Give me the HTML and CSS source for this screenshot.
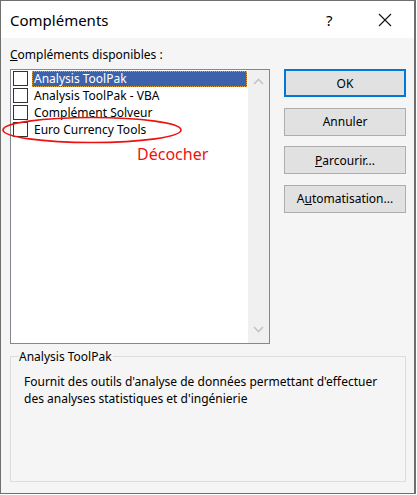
FILE: index.html
```html
<!DOCTYPE html>
<html>
<head>
  <meta charset="utf-8" />
  <title>Compléments</title>
  <link rel="stylesheet" href="styles.css">
</head>
<body>
  <section class="window">
    <header class="titlebar">
      <h1>Compléments</h1>
      <span class="help">?</span>
      <svg class="close" width="14" height="14" viewBox="0 0 14 14">
        <path d="M1 1 L13 13 M13 1 L1 13" stroke="#111" stroke-width="1.1" fill="none" />
      </svg>
    </header>
    <section class="content">
      <section class="main">
        <section class="avail">
          <label class="caption"><u>C</u>ompléments disponibles :</label>
          <div class="list">
            <ul class="items">
              <li class="selected"><span class="box"></span><span class="name">Analysis ToolPak</span></li>
              <li><span class="box"></span><span class="name">Analysis ToolPak - VBA</span></li>
              <li><span class="box"></span><span class="name">Complément Solveur</span></li>
              <li><span class="box"></span><span class="name">Euro Currency Tools</span></li>
            </ul>
            <div class="scrollbar">
              <svg width="11" height="7" viewBox="0 0 11 7"><path d="M1 6 L5.5 1.5 L10 6" stroke="#c4c4c4" stroke-width="1.6" fill="none" /></svg>
              <svg width="11" height="7" viewBox="0 0 11 7"><path d="M1 1 L5.5 5.5 L10 1" stroke="#c4c4c4" stroke-width="1.6" fill="none" /></svg>
            </div>
          </div>
        </section>
        <section class="buttons">
          <button type="button" class="default">OK</button>
          <button type="button">Annuler</button>
          <button type="button"><u>P</u>arcourir...</button>
          <button type="button">A<u>u</u>tomatisation...</button>
        </section>
      </section>
      <fieldset class="details">
        <legend>Analysis ToolPak</legend>
        <p>Fournit des outils d'analyse de données permettant d'effectuer des analyses statistiques et d'ingénierie</p>
      </fieldset>
    </section>
    <!-- annotation drawn over the screenshot -->
    <svg class="mark" width="184" height="30" viewBox="0 0 184 30">
      <ellipse cx="91" cy="14" rx="89" ry="12.5" stroke="#ee1111" stroke-width="1.6" fill="none" />
    </svg>
    <span class="note">Décocher</span>
  </section>
</body>
</html>
```

FILE: styles.css
```css
* { box-sizing: border-box; margin: 0; padding: 0; }
body {
  font-family: "Noto Sans", "Open Sans", sans-serif;
  font-size: 12px;
  color: #000;
  background: #fff;
}
.window {
  position: relative;
  width: 416px;
  height: 494px;
  border: 1px solid #6f6f6f;
  border-right-width: 2px;
  background: #f5f5f5;
  display: flex;
  flex-direction: column;
}
.titlebar {
  height: 37px;
  background: #fff;
  display: flex;
  align-items: center;
  padding-left: 9px;
}
.titlebar h1 {
  font-size: 15px;
  font-weight: normal;
  flex: 1;
}
.help {
  font-size: 15px;
  width: 18px;
  margin-right: 34px;
}
.close {
  margin-right: 22px;
}
.content {
  padding: 8px 8px 0 9px;
  display: flex;
  flex-direction: column;
}
.main {
  display: flex;
  gap: 14px;
}
.caption {
  display: block;
  line-height: 17px;
  height: 23px;
}
.list {
  width: 260px;
  height: 275px;
  border: 1px solid #828790;
  background: #fff;
  display: flex;
}
.items {
  flex: 1;
  list-style: none;
}
.items li {
  height: 17px;
  display: flex;
  align-items: center;
  padding-left: 2px;
}
.box {
  width: 15px;
  height: 15px;
  border: 1px solid #333;
  background: #fff;
  margin-right: 4px;
}
.name {
  line-height: 16px;
  padding: 0 2px;
  flex: 1;
  margin-right: 1px;
}
.selected .name {
  background: #3b62aa;
  color: #fff;
  outline: 1px dotted #e0a040;
  outline-offset: -1px;
}
.scrollbar {
  width: 21px;
  background: #f0f0f0;
  display: flex;
  flex-direction: column;
  justify-content: space-between;
  align-items: center;
  padding: 8px 0 10px;
}
.buttons {
  display: flex;
  flex-direction: column;
  gap: 10.5px;
  padding-top: 23px;
}
button {
  width: 122px;
  height: 28px;
  font: inherit;
  background: #e1e1e1;
  border: 1px solid #adadad;
  color: #000;
}
button.default {
  border: 2px solid #0078d7;
}
.details {
  margin-top: 4px;
  height: 134px;
  border: 1px solid #dcdcdc;
  padding: 0 13px;
}
.details legend {
  margin-left: -5px;
  padding: 0 1px 0 0;
  line-height: 17px;
}
.details p {
  margin-top: 8px;
  line-height: 17px;
}
.mark {
  position: absolute;
  left: 0;
  top: 115px;
}
.note {
  position: absolute;
  left: 136px;
  top: 142px;
  color: #ee1111;
  font-size: 16px;
}
```
